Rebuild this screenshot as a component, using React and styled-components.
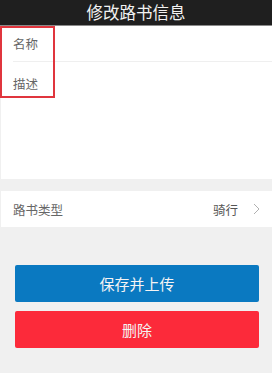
import React from 'react';
import styled, { createGlobalStyle } from 'styled-components';

const GlobalStyle = createGlobalStyle`
  html, body {
    margin: 0;
    padding: 0;
    background: #fff;
  }
  body {
    font-family: "Noto Sans CJK SC", "Noto Sans", sans-serif;
  }
`;

const Page = styled.div`
  position: relative;
  width: 272px;
  height: 373px;
  background-color: #f0f0f0;
  display: flex;
  flex-direction: column;
`;

const Header = styled.div`
  height: 25px;
  background-color: #1f1f1f;
  border-bottom: 1px solid #8a8a8a;
  color: #f2f2f2;
  font-size: 16.5px;
  line-height: 25px;
  text-align: center;
  overflow: hidden;
`;

const Form = styled.div`
  background-color: #fff;
  height: 153px;
  margin-left: 1px;
`;

const Field = styled.div`
  height: ${p => p.tall ? '116px' : '36px'};
  margin-left: 12px;
  border-bottom: ${p => p.line ? '1px solid #efefef' : 'none'};
  display: flex;
  align-items: ${p => p.tall ? 'flex-start' : 'center'};
  padding-top: ${p => p.tall ? '12px' : '0'};
  box-sizing: border-box;
  font-size: 12.5px;
  color: #666;
`;

const Highlight = styled.div`
  position: absolute;
  left: 0;
  top: 26px;
  width: 55px;
  height: 72px;
  border: 2px solid #e0353d;
  box-sizing: border-box;
`;

const Gap = styled.div`
  height: 12px;
`;

const TypeRow = styled.div`
  height: 36px;
  margin-left: 1px;
  background-color: #fff;
  display: flex;
  align-items: center;
  padding: 0 12px;
  font-size: 12.5px;
  color: #666;
`;

const Label = styled.span`
  flex: 1;
`;

const Value = styled.span`
  color: #555;
  margin-right: 15px;
`;

const Chevron = styled.svg`
  width: 7px;
  height: 12px;
`;

const Actions = styled.div`
  display: flex;
  flex-direction: column;
  gap: 9px;
  padding: 38px 13px 0 15px;
`;

const Button = styled.div`
  height: 37px;
  border-radius: 2px;
  background-color: ${p => p.danger ? '#fc2a3a' : '#0a79c1'};
  color: #f4f4f4;
  font-size: 15px;
  display: flex;
  align-items: center;
  justify-content: center;
`;

export default function App() {
  return (
    <>
      <GlobalStyle />
      <Page>
        <Header>修改路书信息</Header>
        <Form>
          <Field line>名称</Field>
          <Field tall>描述</Field>
        </Form>
        <Gap />
        <TypeRow>
          <Label>路书类型</Label>
          <Value>骑行</Value>
          <Chevron viewBox="0 0 7 12">
            <path d="M1 1 L6 6 L1 11" fill="none" stroke="#b0b0b0" strokeWidth="1" />
          </Chevron>
        </TypeRow>
        <Actions>
          <Button>保存并上传</Button>
          <Button danger>删除</Button>
        </Actions>
        <Highlight />
      </Page>
    </>
  );
}
